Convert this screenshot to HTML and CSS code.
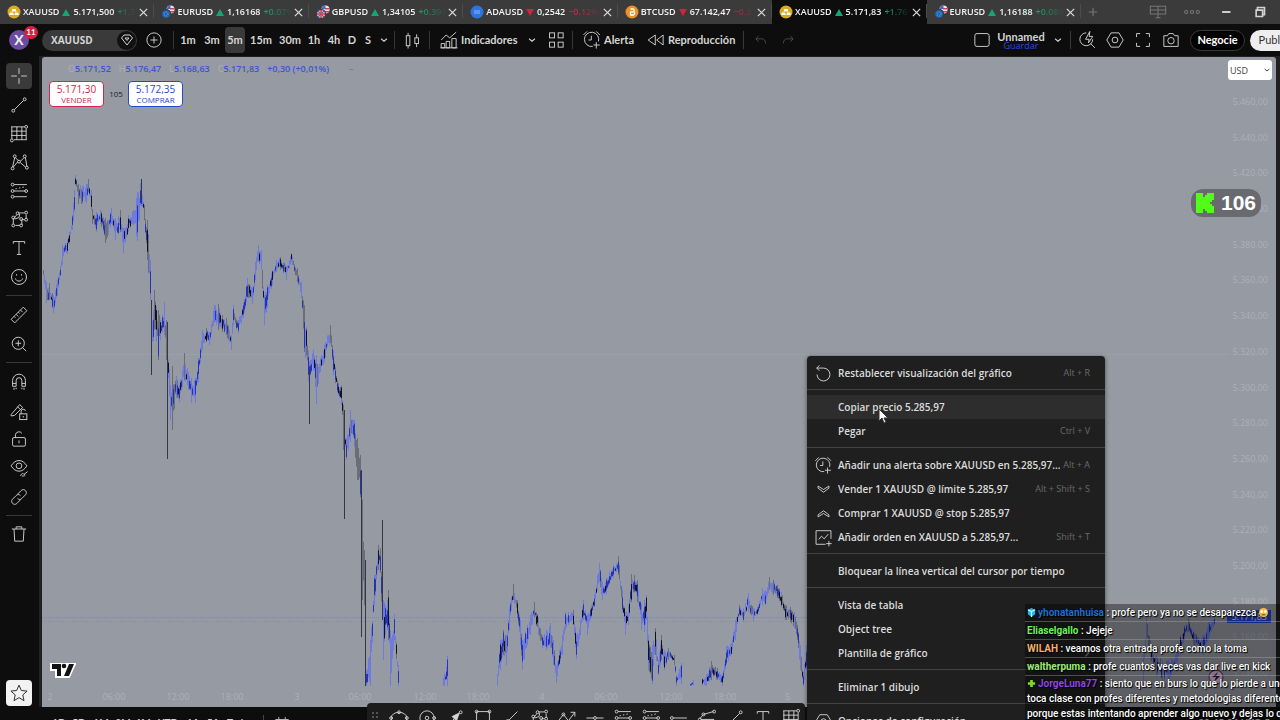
FILE: index.html
```html
<!DOCTYPE html>
<html lang="es">
<head>
<meta charset="utf-8">
<title>XAUUSD 5.171,83</title>
<link rel="stylesheet" href="styles.css">
</head>
<body>
<svg class="sprite" aria-hidden="true">
  <defs>
    <symbol id="i-close" viewBox="0 0 12 12"><path d="M2 2l8 8M10 2l-8 8"/></symbol>
    <symbol id="i-chev" viewBox="0 0 12 12"><path d="M2.500 4.500l3.500 3 3.500-3"/></symbol>
    <symbol id="i-gold" viewBox="0 0 14 14"><circle cx="7" cy="7" r="6.500" fill="#d9ab22" stroke="none"/><path d="M5.500 4h3l1 2.500h-5zM3 7.500h3L7 10H2zM8 7.500h3L12 10H7.500z" fill="#fff" stroke="none"/></symbol>
    <symbol id="i-eur" viewBox="0 0 14 14"><circle cx="9.500" cy="4.500" r="4" fill="#e9e6f2" stroke="none"/><path d="M9 3h4.400v1.500H9zM9 6h4v1.500H9z" fill="#d1404f" stroke="none"/><path d="M6 2.500A4 4 0 0 1 9.500.5V4H6z" fill="#3f66c8" stroke="none"/><circle cx="5" cy="9" r="4.500" fill="#1f63b5" stroke="#3c3c3c"/><circle cx="5" cy="9" r="2" stroke="#4ca0e8" stroke-dasharray="1 1"/></symbol>
    <symbol id="i-gbp" viewBox="0 0 14 14"><circle cx="9.500" cy="4.500" r="4" fill="#e9e6f2" stroke="none"/><path d="M9 3h4.400v1.500H9zM9 6h4v1.500H9z" fill="#d1404f" stroke="none"/><path d="M6 2.500A4 4 0 0 1 9.500.5V4H6z" fill="#3f66c8" stroke="none"/><circle cx="5" cy="9" r="4.500" fill="#eee" stroke="#3c3c3c"/><path d="M5 5v8M1 9h8" stroke="#d8324a" stroke-width="1.500"/><path d="M2 6l2 2M8 6L6 8M2 12l2-2M8 12l-2-2" stroke="#5166b8"/></symbol>
    <symbol id="i-ada" viewBox="0 0 14 14"><circle cx="7" cy="7" r="6.500" fill="#2d74dd" stroke="none"/><path d="M4.500 6h5M4.500 8h5" stroke="#a8cbff" stroke-dasharray="1 1"/></symbol>
    <symbol id="i-btc" viewBox="0 0 14 14"><circle cx="7" cy="7" r="6.500" fill="#ee8f24" stroke="none"/><path d="M5.500 4.200h2.400c1.800 0 1.800 2.700 0 2.700H5.500m0 0h2.800c1.900 0 1.900 2.900 0 2.900H5.500zM6.500 3v1.200M8 3v1.200M6.500 9.800V11M8 9.800V11" stroke="#fff"/></symbol>
    <symbol id="i-cross" viewBox="0 0 28 28"><path d="M14 3v8M14 17v8M3 14h8M17 14h8"/></symbol>
    <symbol id="i-line" viewBox="0 0 28 28"><path d="M7.500 20.500l13-13"/><circle cx="6" cy="22" r="2"/><circle cx="22" cy="6" r="2"/></symbol>
    <symbol id="i-fib" viewBox="0 0 28 28"><path d="M3 4h19M3 10h21M3 16h21M7 22h18M4 4v17M11 4v18M18 4v18M24 7v15"/><circle cx="24" cy="4" r="2"/><circle cx="4" cy="23" r="2"/></symbol>
    <symbol id="i-pattern" viewBox="0 0 28 28"><path d="M5 21L8 8M9 8l4 4M16 13l5-5M23 8l2 12M6 21l6-7M16 15l7 6"/><circle cx="8" cy="6" r="2"/><circle cx="22" cy="6" r="2"/><circle cx="14" cy="13.500" r="2"/><circle cx="5" cy="23" r="2"/><circle cx="25" cy="22" r="2"/></symbol>
    <symbol id="i-pos" viewBox="0 0 28 28"><path d="M7 5h18M7 14h16M7 22h18"/><path d="M9 11l14-3" stroke-dasharray="2 3"/><circle cx="5" cy="5" r="2"/><circle cx="5" cy="14" r="2"/><circle cx="5" cy="22" r="2"/><circle cx="24" cy="14" r="2"/></symbol>
    <symbol id="i-brush" viewBox="0 0 28 28"><path d="M6 21v-7l5-6M13 5.500h9M24 8v6M22 15h-4v7M9 23h6M15 7l-1 5-6 2"/><circle cx="6" cy="12" r="2"/><circle cx="12" cy="6" r="2"/><circle cx="24" cy="5" r="2"/><circle cx="24" cy="15" r="2"/><circle cx="17" cy="14" r="2"/><circle cx="6" cy="23" r="2"/><circle cx="17" cy="23" r="2"/></symbol>
    <symbol id="i-text" viewBox="0 0 28 28"><path d="M6 8V5h16v3M14 5v18M11 23h6"/></symbol>
    <symbol id="i-smile" viewBox="0 0 28 28"><circle cx="14" cy="14" r="10.500"/><path d="M9 16c1 5 9 5 10 0M10.500 10v2M17.500 10v2"/></symbol>
    <symbol id="i-ruler" viewBox="0 0 28 28"><path d="M3 20L20 3l5 5L8 25zM7 16l2 2M10 13l3 3M13 10l2 2M16 7l3 3"/></symbol>
    <symbol id="i-zoom" viewBox="0 0 28 28"><circle cx="13" cy="13" r="8.500"/><path d="M19 19l5 5M13 9v8M9 13h8"/></symbol>
    <symbol id="i-magnet" viewBox="0 0 28 28"><path d="M5 20v-8a9 9 0 0 1 18 0v8h-5v-8a4 4 0 0 0-8 0v8zM5 16h5M18 16h5M7 22v3M10 22v2M18 22v2M21 22v3"/></symbol>
    <symbol id="i-penlock" viewBox="0 0 28 28"><path d="M3 19L15 5l4 4L8 20l-5 1zM12 8l4 4"/><rect x="15" y="18" width="10" height="8"/><path d="M17 18v-3a3 3 0 0 1 6-1M20 21v2"/></symbol>
    <symbol id="i-lock" viewBox="0 0 28 28"><rect x="5" y="12" width="18" height="12" rx="2"/><path d="M9 12V8a5 5 0 0 1 9-2M14 16v4"/></symbol>
    <symbol id="i-eye" viewBox="0 0 28 28"><path d="M3 11c6-10 16-10 22 0-6 10-16 10-22 0z"/><circle cx="14" cy="11" r="4"/><path d="M16 25c2-4 4-4 5-2l5-4M18 25c4 1 5-1 4-2"/></symbol>
    <symbol id="i-link" viewBox="0 0 28 28"><path d="M12 10l5-5c4-4 10 2 6 6l-5 5c-2 2-4 2-6 0M16 18l-5 5c-4 4-10-2-6-6l5-5c2-2 4-2 6 0"/></symbol>
    <symbol id="i-trash" viewBox="0 0 28 28"><path d="M4 7h20M10 7V4h8v3M7 7l1 17h12l1-17"/></symbol>
    <symbol id="i-star" viewBox="0 0 28 28"><path d="M14 3l3.300 7.500 8 .8-6 5.400 1.700 8L14 20.500l-7 4.200 1.700-8-6-5.400 8-.8z"/></symbol>
    <symbol id="i-diamond" viewBox="0 0 28 28"><path d="M8 4h12l5 6-11 14L3 10zM10 10h8l-4 5z"/></symbol>
    <symbol id="i-plus" viewBox="0 0 28 28"><circle cx="14" cy="14" r="10"/><path d="M14 9v10M9 14h10"/></symbol>
    <symbol id="i-candles" viewBox="0 0 28 28"><rect x="6" y="8" width="5" height="14"/><rect x="18" y="11" width="5" height="8"/><path d="M8.500 4v4M8.500 22v4M20.500 6v5M20.500 19v5"/></symbol>
    <symbol id="i-ind" viewBox="0 0 28 28"><path d="M3 14l7-7 5 4 9-8M3 25v-6h5v6zM10 25v-9h5v9zM18 25V12h6v13zM2 25h24"/></symbol>
    <symbol id="i-grid" viewBox="0 0 28 28"><rect x="5" y="4" width="7" height="7"/><rect x="17" y="4" width="7" height="7"/><rect x="5" y="17" width="7" height="7"/><rect x="17" y="17" width="7" height="7"/></symbol>
    <symbol id="i-alarm" viewBox="0 0 28 28"><path d="M23 16a10 10 0 1 0-8 7M13 8v6H9M2 7l5-5M20 2l5 5M20 17v9M16 21h9"/></symbol>
    <symbol id="i-rewind" viewBox="0 0 28 28"><path d="M13 7v14L3 14zM24 7v14l-9-7z"/></symbol>
    <symbol id="i-undo" viewBox="0 0 28 28"><path d="M10 7l-5 5 5 5M5 12h10q7 0 7 8"/></symbol>
    <symbol id="i-redo" viewBox="0 0 28 28"><path d="M18 7l5 5-5 5M23 12H13q-7 0-7 8"/></symbol>
    <symbol id="i-square" viewBox="0 0 28 28"><rect x="4" y="5" width="20" height="18" rx="3"/></symbol>
    <symbol id="i-quick" viewBox="0 0 28 28"><path d="M13 4a9 9 0 1 0 9 9M19 19l6 6M18 2l-6 11h5l-1 5 6-9h-5z"/></symbol>
    <symbol id="i-hex" viewBox="0 0 28 28"><path d="M8.500 4h11l6 10-6 10h-11l-6-10z"/><circle cx="14" cy="14" r="4"/></symbol>
    <symbol id="i-full" viewBox="0 0 28 28"><path d="M5 10V5h5M18 5h5v5M23 18v5h-5M10 23H5v-5"/></symbol>
    <symbol id="i-cam" viewBox="0 0 28 28"><path d="M4 8h5l2-3h6l2 3h5v15H4z"/><circle cx="14" cy="15" r="4.500"/></symbol>
    <symbol id="i-reset" viewBox="0 0 28 28"><path d="M8 2L4 6l4 4M4 6h10a9.500 9.500 0 1 1-9.500 9.500"/></symbol>
    <symbol id="i-down2" viewBox="0 0 28 28"><path d="M6 9l8 5 8-5v3l-8 6-8-6z"/></symbol>
    <symbol id="i-up2" viewBox="0 0 28 28"><path d="M6 19l8-5 8 5v-3l-8-6-8 6z"/></symbol>
    <symbol id="i-order" viewBox="0 0 28 28"><path d="M25 16V4H3v20h14M7 17l4-5 4 4 6-7M22 19v8M18 23h8"/></symbol>
    <symbol id="i-panes" viewBox="0 0 28 28"><path d="M2 5h24v12H2zM2 11h24M14 5v18M10 23h8"/></symbol>
    <symbol id="i-more" viewBox="0 0 28 28"><circle cx="5" cy="14" r="2.500"/><circle cx="14" cy="14" r="2.500"/><circle cx="23" cy="14" r="2.500"/></symbol>
    <symbol id="i-ellipse" viewBox="0 0 28 28"><ellipse cx="14" cy="14" rx="11" ry="8"/><circle cx="14" cy="6" r="2"/><circle cx="3" cy="14" r="2"/><circle cx="25" cy="14" r="2"/></symbol>
    <symbol id="i-circle" viewBox="0 0 28 28"><circle cx="14" cy="14" r="10"/><circle cx="14" cy="14" r="2.500"/><circle cx="24" cy="14" r="2"/></symbol>
    <symbol id="i-arrow" viewBox="0 0 28 28"><path d="M5 23l8-8"/><path d="M10 12l10-5-4 11z" fill="currentColor"/><circle cx="22" cy="6" r="2"/></symbol>
    <symbol id="i-rect" viewBox="0 0 28 28"><path d="M5 5h18v18H5z"/><circle cx="5" cy="5" r="2"/><circle cx="23" cy="5" r="2"/></symbol>
    <symbol id="i-paint" viewBox="0 0 28 28"><path d="M23 5L11 17M5 23c0-5 3-8 7-6"/></symbol>
    <symbol id="i-wave" viewBox="0 0 28 28"><path d="M2 18l7-9 7 9 9-12M19 6h6v6"/><circle cx="9" cy="9" r="2"/></symbol>
    <symbol id="i-hline" viewBox="0 0 28 28"><path d="M2 14h10M16 14h10"/><circle cx="14" cy="14" r="2"/></symbol>
    <symbol id="i-ray" viewBox="0 0 28 28"><path d="M6 14h19"/><circle cx="4" cy="14" r="2"/></symbol>
    <symbol id="i-fork" viewBox="0 0 28 28"><path d="M4 15L9 9l14-4M5 16h19"/><circle cx="9" cy="9" r="2"/><circle cx="24" cy="5" r="2"/><circle cx="4" cy="16" r="2"/></symbol>
    <symbol id="i-cal" viewBox="0 0 28 28"><path d="M4 7h20v17H4zM4 12h20M9 3v4M19 3v4"/></symbol>
  </defs>
</svg>

<div class="app">
  <header class="tabs">
    <div class="tab-list">
      <div class="tab"><svg class="coin"><use href="#i-gold"/></svg><span class="quote"><b>XAUUSD</b><i class="up"></i>5.171,500<em class="gain">+1.77%</em></span><button class="x" aria-label="Cerrar"><svg><use href="#i-close"/></svg></button></div>
      <div class="tab"><svg class="coin"><use href="#i-eur"/></svg><span class="quote"><b>EURUSD</b><i class="up"></i>1,16168<em class="gain">+0.07%</em></span><button class="x" aria-label="Cerrar"><svg><use href="#i-close"/></svg></button></div>
      <div class="tab"><svg class="coin"><use href="#i-gbp"/></svg><span class="quote"><b>GBPUSD</b><i class="up"></i>1,34105<em class="gain">+0.39%</em></span><button class="x" aria-label="Cerrar"><svg><use href="#i-close"/></svg></button></div>
      <div class="tab"><svg class="coin"><use href="#i-ada"/></svg><span class="quote"><b>ADAUSD</b><i class="down"></i>0,2542<em class="loss">−0.12%</em></span><button class="x" aria-label="Cerrar"><svg><use href="#i-close"/></svg></button></div>
      <div class="tab"><svg class="coin"><use href="#i-btc"/></svg><span class="quote"><b>BTCUSD</b><i class="down"></i>67.142,47<em class="loss">−0.31%</em></span><button class="x" aria-label="Cerrar"><svg><use href="#i-close"/></svg></button></div>
      <div class="tab active"><svg class="coin"><use href="#i-gold"/></svg><span class="quote"><b>XAUUSD</b><i class="up"></i>5.171,83<em class="gain">+1.76%</em></span><button class="x" aria-label="Cerrar"><svg><use href="#i-close"/></svg></button></div>
      <div class="tab"><svg class="coin"><use href="#i-eur"/></svg><span class="quote"><b>EURUSD</b><i class="up"></i>1,16188<em class="gain">+0.08%</em></span><button class="x" aria-label="Cerrar"><svg><use href="#i-close"/></svg></button></div>
    </div>
    <button class="add" aria-label="Nueva pestaña"><svg viewBox="0 0 12 12"><path d="M6 1v10M1 6h10"/></svg></button>
    <div class="window">
      <button class="dim" aria-label="Paneles"><svg><use href="#i-panes"/></svg></button>
      <button class="dim" aria-label="Más"><svg><use href="#i-more"/></svg></button>
      <button aria-label="Minimizar"><svg viewBox="0 0 28 28"><path d="M8 14h13" stroke-width="3"/></svg></button>
      <button aria-label="Restaurar"><svg viewBox="0 0 28 28"><path d="M10 10V7h11v11h-3M8 11h10v10H8z" stroke-width="2.500"/></svg></button>
    </div>
  </header>

  <div class="toolbar">
    <div class="account"><span class="avatar">X</span><span class="count">11</span></div>
    <div class="symbol"><button class="name">XAUUSD</button><button class="gem" aria-label="Detalles"><svg class="ic"><use href="#i-diamond"/></svg></button></div>
    <button class="tool w34" aria-label="Comparar"><svg class="ic"><use href="#i-plus"/></svg></button>
    <span class="vr"></span>
    <button class="tool w24">1m</button><button class="tool w24">3m</button><button class="tool on">5m</button><button class="tool w30">15m</button><button class="tool w28">30m</button><button class="tool w20">1h</button><button class="tool w20">4h</button><button class="tool w16">D</button><button class="tool w16">S</button>
    <button class="tool w16" aria-label="Intervalos"><svg class="chev"><use href="#i-chev"/></svg></button>
    <span class="vr"></span>
    <button class="tool w30" aria-label="Velas"><svg class="ic"><use href="#i-candles"/></svg></button>
    <span class="vr"></span>
    <button class="tool wide w90"><svg class="ic"><use href="#i-ind"/></svg>Indicadores</button>
    <button class="tool w20" aria-label="Favoritos"><svg class="chev"><use href="#i-chev"/></svg></button>
    <button class="tool w28" aria-label="Plantillas"><svg class="ic"><use href="#i-grid"/></svg></button>
    <span class="vr"></span>
    <button class="tool wide w64"><svg class="ic"><use href="#i-alarm"/></svg>Alerta</button>
    <button class="tool wide w102"><svg class="ic"><use href="#i-rewind"/></svg>Reproducción</button>
    <span class="vr"></span>
    <button class="tool w30 off" aria-label="Deshacer"><svg class="ic small"><use href="#i-undo"/></svg></button>
    <button class="tool w24 off" aria-label="Rehacer"><svg class="ic small"><use href="#i-redo"/></svg></button>
    <div class="right">
      <button class="tool w24" aria-label="Diseño"><svg class="ic"><use href="#i-square"/></svg></button>
      <button class="layout"><span>Unnamed</span><small>Guardar</small></button>
      <button class="tool w20" aria-label="Diseños"><svg class="chev"><use href="#i-chev"/></svg></button>
      <span class="vr"></span>
      <button class="tool w28" aria-label="Búsqueda"><svg class="ic"><use href="#i-quick"/></svg></button>
      <button class="tool w28" aria-label="Configuración"><svg class="ic"><use href="#i-hex"/></svg></button>
      <button class="tool w28" aria-label="Pantalla completa"><svg class="ic"><use href="#i-full"/></svg></button>
      <button class="tool w28" aria-label="Captura"><svg class="ic"><use href="#i-cam"/></svg></button>
      <button class="trade">Negocie</button>
      <button class="publish">Publicar</button>
    </div>
  </div>

  <div class="main">
    <nav class="side">
      <div class="group g8">
        <button class="sel" aria-label="Cursor"><svg><use href="#i-cross"/></svg></button>
        <button aria-label="Líneas"><svg><use href="#i-line"/></svg></button>
        <button aria-label="Fibonacci"><svg><use href="#i-fib"/></svg></button>
        <button aria-label="Patrones"><svg><use href="#i-pattern"/></svg></button>
        <button aria-label="Posiciones"><svg><use href="#i-pos"/></svg></button>
        <button aria-label="Formas"><svg><use href="#i-brush"/></svg></button>
        <button aria-label="Texto"><svg><use href="#i-text"/></svg></button>
        <button aria-label="Iconos"><svg><use href="#i-smile"/></svg></button>
      </div>
      <hr>
      <div class="group g2">
        <button aria-label="Medir"><svg><use href="#i-ruler"/></svg></button>
        <button aria-label="Ampliar"><svg><use href="#i-zoom"/></svg></button>
      </div>
      <hr>
      <div class="group g5">
        <button aria-label="Imán"><svg><use href="#i-magnet"/></svg></button>
        <button aria-label="Modo dibujo"><svg><use href="#i-penlock"/></svg></button>
        <button aria-label="Bloquear"><svg><use href="#i-lock"/></svg></button>
        <button aria-label="Ocultar"><svg><use href="#i-eye"/></svg></button>
        <button aria-label="Sincronizar"><svg><use href="#i-link"/></svg></button>
      </div>
      <hr>
      <div class="group"><button aria-label="Eliminar"><svg><use href="#i-trash"/></svg></button></div>
      <button class="fav" aria-label="Favoritos"><svg><use href="#i-star"/></svg></button>
    </nav>

    <section class="chart">
      <svg class="plot" id="plot" viewBox="42 57 1234 650" preserveAspectRatio="none" aria-label="Gráfico de velas XAUUSD"></svg>
      <div class="prices" id="prices"></div>
      <div class="times" id="times"></div>
      <span class="last">5.171,83</span>
      <div class="legend"><span><i>O</i>5.171,52</span><span><i>H</i>5.176,47</span><span><i>L</i>5.168,63</span><span><i>C</i>5.171,83</span><span>+0,30 (+0,01%)</span><span class="dash">–</span></div>
      <div class="orders">
        <button class="sell">5.171,30<small>VENDER</small></button>
        <span>105</span>
        <button class="buy">5.172,35<small>COMPRAR</small></button>
      </div>
      <select class="currency" aria-label="Moneda"><option>USD</option></select>
      <svg class="cur-chev"><use href="#i-chev"/></svg>
      <svg class="tv" viewBox="0 0 26 16"><path d="M1 2h24l-6 13H6V8H1z" fill="#fff" stroke="#fff" stroke-width="2"/><path d="M2 2h9v12H7V7H2zM19 2h5l-5 12h-5z" fill="#111" stroke="none"/><circle cx="14" cy="4" r="2.300" fill="#111" stroke="none"/></svg>
      <svg class="flash" viewBox="0 0 16 16"><circle cx="8" cy="8" r="7" fill="#d6b9dc" stroke="#6d4878"/><path d="M10 3L4 8h4l-2 5 6-6H8z" fill="#30203a" stroke="none"/></svg>
    </section>
  </div>

  <footer class="ranges">
    <button class="w20">1D</button><button class="w20">5D</button><button class="w24">1M</button><button class="w20">3M</button><button class="w20">6M</button><button class="w30">YTD</button><button class="w20">1A</button><button class="w20">5A</button><button class="w30">Todo</button>
    <button class="cal" aria-label="Ir a fecha"><svg><use href="#i-cal"/></svg></button>
    <span class="clock">20:45:24 UTC-5</span>
  </footer>

  <div class="draw">
    <span class="grip"></span>
    <button aria-label="Elipse"><svg><use href="#i-ellipse"/></svg></button>
    <button aria-label="Círculo"><svg><use href="#i-circle"/></svg></button>
    <button aria-label="Flecha"><svg><use href="#i-arrow"/></svg></button>
    <button aria-label="Rectángulo"><svg><use href="#i-rect"/></svg></button>
    <button aria-label="Pincel"><svg><use href="#i-paint"/></svg></button>
    <button aria-label="Trazado"><svg><use href="#i-brush"/></svg></button>
    <button aria-label="Onda"><svg><use href="#i-wave"/></svg></button>
    <button aria-label="Horizontal"><svg><use href="#i-hline"/></svg></button>
    <button aria-label="Largo"><svg><use href="#i-pos"/></svg></button>
    <button aria-label="Corto"><svg><use href="#i-pos"/></svg></button>
    <button aria-label="Rayo"><svg><use href="#i-ray"/></svg></button>
    <button aria-label="Horquilla"><svg><use href="#i-fork"/></svg></button>
    <button aria-label="Tendencia"><svg><use href="#i-line"/></svg></button>
    <button aria-label="Texto"><svg><use href="#i-text"/></svg></button>
    <button aria-label="Fibonacci"><svg><use href="#i-fib"/></svg></button>
  </div>

  <div class="menu" role="menu">
    <button role="menuitem"><svg><use href="#i-reset"/></svg><span>Restablecer visualización del gráfico</span><kbd>Alt + R</kbd></button>
    <hr>
    <button role="menuitem" class="hover"><span>Copiar precio 5.285,97</span></button>
    <button role="menuitem"><span>Pegar</span><kbd>Ctrl + V</kbd></button>
    <hr>
    <button role="menuitem"><svg><use href="#i-alarm"/></svg><span>Añadir una alerta sobre XAUUSD en 5.285,97...</span><kbd>Alt + A</kbd></button>
    <button role="menuitem"><svg><use href="#i-down2"/></svg><span>Vender 1 XAUUSD @ límite 5.285,97</span><kbd>Alt + Shift + S</kbd></button>
    <button role="menuitem"><svg><use href="#i-up2"/></svg><span>Comprar 1 XAUUSD @ stop 5.285,97</span></button>
    <button role="menuitem"><svg><use href="#i-order"/></svg><span>Añadir orden en XAUUSD a 5.285,97...</span><kbd>Shift + T</kbd></button>
    <hr>
    <button role="menuitem"><span>Bloquear la línea vertical del cursor por tiempo</span></button>
    <hr>
    <button role="menuitem"><span>Vista de tabla</span></button>
    <button role="menuitem"><span>Object tree</span></button>
    <button role="menuitem"><span>Plantilla de gráfico</span><svg class="sub" viewBox="0 0 12 12"><path d="M4 2l4 4-4 4"/></svg></button>
    <hr>
    <button role="menuitem"><span>Eliminar 1 dibujo</span></button>
    <hr>
    <button role="menuitem"><svg><use href="#i-hex"/></svg><span>Opciones de configuración...</span></button>
  </div>
  <svg class="pointer" viewBox="0 0 12 16"><path d="M2 1v12l3-3 2 5 2-1-2-4h4z" fill="#fff" stroke="#333" stroke-width="1"/></svg>

  <div class="viewers"><svg viewBox="0 0 18 20"><path d="M0 0h7v4h2V2h2V0h7v7h-2v2h-2v2h2v2h2v7h-7v-2H9v-2H7v4H0z" fill="#53fc18" stroke="none"/></svg>106</div>

  <div class="chat">
    <p><svg viewBox="0 0 10 10"><path d="M5 0l4 2v5L5 10 1 7V2z" fill="#1fb6e8" stroke="none"/><path d="M1 2l4 2 4-2M5 4v6" stroke="#bff"/></svg><b class="c1">yhonatanhuisa</b> : profe pero ya no se desaparezca <svg viewBox="0 0 10 10"><circle cx="5" cy="5" r="5" fill="#f5bd3c" stroke="none"/><circle cx="3" cy="4" r="1.500" fill="#fff" stroke="none"/><circle cx="7" cy="4" r="1.500" fill="#fff" stroke="none"/><path d="M3 7.500h4" stroke="#8a4b10"/></svg></p>
    <p><b class="c2">Eliaselgallo</b> : Jejeje</p>
    <p><b class="c3">WILAH</b> : veamos otra entrada profe como la toma</p>
    <p><b class="c4">waltherpuma</b> : profe cuantos veces vas dar live en kick</p>
    <p><svg viewBox="0 0 10 10"><path d="M3.500 1h3v2.500H9v3H6.500V9h-3V6.500H1v-3h2.500z" fill="#7ddb22" stroke="none"/></svg><b class="c5">JorgeLuna77</b> : siento que en burs lo que lo pierde a uno es<br>toca clase con profes diferentes y metodologias diferentes y<br>porque estas intentando aprender algo nuevo y dejas lo que</p>
  </div>
</div>
<script src="chart.js"></script>
</body>
</html>
```

FILE: styles.css
```css
* { box-sizing: border-box; }
body {
  margin: 0;
  overflow: hidden;
  background: #0c0c0c;
  color: #d4d4d4;
  font: 700 11px/14px Lato, "Noto Sans", sans-serif;
}
button {
  margin: 0;
  padding: 0;
  border: 0;
  background: none;
  color: inherit;
  font: inherit;
  white-space: nowrap;
}
svg { fill: none; stroke: currentColor; stroke-width: 1.3; display: block; flex: none; }
.sprite { position: absolute; width: 0; height: 0; }
.app { position: relative; display: flex; flex-direction: column; height: 100vh; overflow: hidden; }
.w16 { width: 16px; } .w20 { width: 20px; } .w24 { width: 24px; } .w28 { width: 28px; }
.w30 { width: 30px; } .w34 { width: 34px; } .w64 { width: 64px; } .w90 { width: 90px; } .w102 { width: 102px; }

/* Tab strip */
.tabs { display: flex; flex: 0 0 24px; background: #3b3b3b; }
.tab-list { display: flex; flex: 0 1 1081px; min-width: 0; }
.tab { display: flex; flex: 1 1 0; min-width: 0; align-items: center; padding: 0 5px 0 7px; font: 600 9px/14px "Open Sans", sans-serif; color: #f4f4f4; position: relative; }
.tab::after { content: ""; position: absolute; right: 0; top: 4px; height: 14px; width: 1px; background: #4c4c4c; }
.tab.active { background: #0d0d0d; }
.coin { width: 14px; height: 14px; }
.quote { display: flex; align-items: center; flex: 1; min-width: 0; overflow: hidden; white-space: nowrap; margin-left: 2px;
  -webkit-mask-image: linear-gradient(90deg, #000 78%, transparent); mask-image: linear-gradient(90deg, #000 78%, transparent); }
.quote b { font-weight: 600; }
.quote em { font-style: normal; margin-left: 3px; }
.gain { color: #1f9a6b; } .loss { color: #c32a48; }
.up, .down { margin: 0 3px; border: 4px solid transparent; border-top: 0; border-bottom: 7px solid #17a673; }
.down { border-bottom: 0; border-top: 7px solid #cf2340; }
.x svg { width: 11px; height: 11px; color: #ddd; }
.add { width: 24px; color: #777; }
.add svg { width: 10px; height: 10px; margin: 0 auto; }
.window { display: flex; margin-left: auto; padding-right: 3px; }
.window button { width: 34px; }
.window svg { width: 18px; height: 18px; margin: 0 auto; stroke-width: 1.6; }
.window .dim { color: #777; }

/* Main toolbar */
.toolbar { display: flex; flex: 0 0 32px; align-items: center; background: #0d0d0d; }
.account { position: relative; width: 42px; padding-left: 9px; }
.avatar { display: block; width: 20px; height: 20px; border-radius: 50%; background: #6b4ca0; color: #eee; text-align: center; font-size: 14px; line-height: 20px; }
.count { position: absolute; left: 24px; top: -4px; width: 14px; height: 13px; border-radius: 7px; background: #d3203f; color: #fff; font-size: 8px; line-height: 13px; text-align: center; }
.symbol { display: flex; align-items: center; width: 95px; height: 21px; padding: 0 1px 0 9px; border-radius: 11px; background: #3a3a3a; }
.symbol .name { flex: 1; text-align: left; font: 700 10px/14px "Open Sans", sans-serif; }
.gem { display: grid; place-items: center; width: 19px; height: 19px; border-radius: 50%; background: #111; }
.gem .ic { width: 14px; height: 14px; stroke-width: 2; }
.tool { display: flex; align-items: center; justify-content: center; flex: none; height: 26px; }
.tool.wide { justify-content: flex-start; gap: 2px; padding-left: 7px; }
.tool.on { width: 20px; margin: 0 1px; border-radius: 4px; background: #3a3a3a; }
.tool.off { color: #5a5a5a; }
.ic { width: 20px; height: 20px; }
.ic.small { width: 16px; height: 16px; }
.chev { width: 10px; height: 10px; }
.vr { flex: none; width: 1px; height: 18px; margin: 0 2px; background: #383838; }
.right { display: flex; align-items: center; flex: none; margin-left: auto; margin-right: -26px; }
.layout { width: 54px; line-height: 11px; }
.layout small { display: block; font: 400 9px/8px "Open Sans", sans-serif; color: #2c4be8; }
.trade, .publish { height: 21px; border-radius: 11px; padding: 0 8px; }
.trade { margin-left: 5px; background: #000; border: 1px solid #3a3a3a; color: #fff; width: 55px; padding: 0; }
.publish { margin-left: 5px; background: #eee; color: #333; width: 56px; font-weight: 400; }

/* Body: drawing tools and chart */
.main { display: flex; flex: 1; min-height: 0; background: #202020; }
.side { display: flex; flex-direction: column; flex: 0 0 39px; margin-right: 3px; padding: 6px 6px 1px; background: #0d0d0d; }
.group { display: grid; grid-auto-rows: 1fr; }
.g8 { height: 229px; } .g2 { height: 57px; } .g5 { height: 143px; }
.side button { display: grid; place-items: center; width: 26px; min-height: 26px; border-radius: 4px; align-self: center; }
.side svg { width: 20px; height: 20px; }
.side .sel { background: #3a3a3a; }
.side hr { width: 26px; height: 1px; margin: 4px 0 5px; border: 0; background: #383838; }
.side .fav { margin-top: auto; background: #f2f2f2; color: #222; align-self: flex-start; }
.chart { position: relative; flex: 1; margin: 1px 4px 0 0; background: #969aa3; border-radius: 3px 3px 0 0; overflow: hidden; font-weight: 400; font-family: "Open Sans", sans-serif; }
.plot { position: absolute; inset: 0; width: 100%; height: 100%; }
.prices { position: absolute; right: 8px; top: 39px; bottom: 28px; display: flex; flex-direction: column; justify-content: space-between; color: #adb0ba; font-size: 9px; line-height: 12px; }
.times { position: absolute; left: 0; right: 0; bottom: 4px; height: 12px; color: #adb0ba; font-size: 9px; line-height: 12px; }
.times span { position: absolute; transform: translateX(-50%); }
.last { position: absolute; right: 5px; bottom: 84px; padding: 0 4px; background: #1c46d8; color: #dfe4ff; font-size: 9px; line-height: 13px; }
.legend { position: absolute; left: 26px; top: 6px; display: flex; gap: 8px; color: #3d55cf; font-size: 9px; font-weight: 600; line-height: 12px; }
.legend i { font-style: normal; font-weight: 400; color: #adb0ba; }
.dash { margin-left: 12px; opacity: .5; }
.orders { position: absolute; left: 7px; top: 24px; display: flex; align-items: center; font-size: 10px; }
.orders button { width: 55px; height: 26px; border: 1px solid; border-radius: 4px; background: #fff; line-height: 11px; }
.orders small { display: block; font-size: 8px; line-height: 10px; }
.orders span { width: 24px; text-align: center; font-size: 8px; color: #222; }
.sell { color: #c92a48; } .buy { color: #2948c8; }
.currency { position: absolute; right: 4px; top: 3px; width: 44px; height: 20px; padding: 0 2px; appearance: none; border: 0; border-radius: 3px; background: #fff; color: #444; font: 400 9px "Open Sans", sans-serif; }
.cur-chev { position: absolute; right: 5px; top: 9px; width: 8px; height: 8px; color: #333; pointer-events: none; }
.tv { position: absolute; left: 8px; bottom: 29px; width: 26px; height: 16px; }
.flash { position: absolute; right: 52px; bottom: 22px; width: 16px; height: 16px; }

/* Range bar */
.ranges { display: flex; align-items: flex-start; flex: 0 0 13px; padding: 8px 10px 0 49px; overflow: hidden; background: #0d0d0d; font-size: 10px; }
.ranges button { flex: none; }
.cal { margin-left: 10px; padding-left: 9px; border-left: 1px solid #444; }
.cal svg { width: 18px; height: 18px; }
.clock { margin-left: auto; }

/* Floating drawing toolbar */
.draw { position: absolute; left: 367px; top: calc(100vh - 17px); display: flex; align-items: center; height: 29px; border-radius: 4px; background: #1c1c1c; padding-left: 4px; }
.draw button { width: 28px; }
.draw svg { width: 20px; height: 20px; margin: 0 auto; }
.grip { width: 8px; height: 14px; background: radial-gradient(circle, #555 1px, transparent 1px) 0 0 / 4px 4px; margin-right: 6px; }

/* Context menu */
.menu { position: absolute; left: 807px; top: 356px; width: 298px; padding: 5px 0; background: #1f1f1f; border-radius: 4px; box-shadow: 0 1px 4px rgba(0, 0, 0, .5); font: 600 10px/14px "Open Sans", sans-serif; color: #dcdcdc; }
.menu button { position: relative; display: flex; align-items: center; width: 100%; height: 24px; padding: 0 15px 0 31px; }
.menu svg { position: absolute; left: 7px; width: 19px; height: 19px; }
.menu span { flex: 1; text-align: left; }
.menu kbd { font: 400 9px/14px "Open Sans", sans-serif; color: #6a6a6a; }
.menu .sub { left: auto; right: 13px; width: 10px; height: 10px; color: #999; }
.menu .hover { background: #2d2d2d; }
.menu hr { height: 1px; margin: 4px 0 5px; border: 0; background: #434343; }
.pointer { position: absolute; left: 877px; top: 408px; width: 12px; height: 16px; }

/* Stream overlays */
.viewers { position: absolute; right: 19px; top: 189px; display: flex; align-items: center; gap: 7px; height: 28px; padding: 0 5px; border-radius: 12px; background: #696a70; color: #fff; font: 700 21px/28px "Liberation Sans", Arial, sans-serif; }
.viewers svg { width: 18px; height: 20px; }
.chat { position: absolute; left: 1025px; right: 0; top: 604px; bottom: 0; overflow: hidden; background: rgba(0, 0, 0, .38); color: #fff; font: 500 10px/15px Roboto, sans-serif; white-space: nowrap; text-shadow: 0 0 1px #000, 1px 1px 1px #000; }
.chat p { margin: 0; padding: 1px 2px; border-bottom: 1px solid rgba(190, 190, 195, .35); }
.chat p:last-child { padding-top: 0; }
.chat b { font-weight: 700; }
.chat svg { display: inline-block; width: 9px; height: 9px; margin-right: 2px; vertical-align: -1px; }
.c1 { color: #1f6fd0; } .c2 { color: #6cf25a; } .c3 { color: #f3b26b; } .c4 { color: #9fea7c; } .c5 { color: #9146e0; }
```

FILE: chart.js
```js
// Price envelope of each session: [x, high, low]
const runs = [
  [[43,270,275],[46,282,303],[49,283,300],[53,295,313],[57,280,296],[60,266,276],[62,245,265],[65,243,252],[67,240,254],[69,232,244],[72,215,230],[74,190,212],[75,175,185],[78,184,204],[82,186,204],[86,184,203],[88,179,192],[91,190,210],[92,209,224],[96,212,232],[100,210,224],[105,218,243],[108,220,235],[111,208,224],[115,218,240],[120,210,232],[123,228,253],[128,215,232],[133,210,225],[137,192,241],[141,179,206],[144,205,220],[147,220,260],[150,260,300],[151,300,374],[154,290,330],[158,310,360],[160,320,340],[164,302,335],[166,320,360],[170,385,420],[172,366,430],[176,376,398],[179,385,402],[184,353,380],[188,372,390],[191,378,403],[195,378,403],[198,358,382],[202,330,350],[206,328,342],[209,332,345],[214,305,322],[218,304,330],[222,315,332],[226,318,335],[231,335,350],[233,305,325],[238,320,333],[243,302,318],[247,278,298],[252,288,304],[255,262,280],[258,245,262],[261,250,270],[264,295,325],[267,285,308],[272,270,285],[276,260,272],[280,257,270],[286,266,280],[291,253,262],[297,268,282],[301,282,298],[304,305,352],[308,350,382],[313,350,370],[316,355,404],[320,358,372],[324,345,362],[330,325,343],[333,350,375],[337,380,392],[341,385,405],[343,405,450],[346,438,460],[350,410,442],[354,420,447],[357,438,480],[360,455,497],[362,500,600],[364,550,605],[366,670,686],[370,640,686],[374,575,605],[378,545,570],[380,548,573],[383,600,660],[385,605,635],[388,590,640],[390,630,686],[394,614,640],[398,665,686]],
  [[443,678,686],[447,656,686]],
  [[497,674,686],[500,640,670],[503,630,655],[506,635,665],[509,607,630],[513,584,600],[517,600,618],[520,620,645],[522,640,670],[527,625,645],[530,615,635],[534,602,617],[538,618,635],[542,635,648],[546,630,650],[550,623,648],[553,640,665],[556,665,683],[559,650,665],[562,635,655],[565,612,630],[568,612,625],[573,610,625],[576,635,659],[580,620,635],[583,600,620],[587,615,635],[591,605,618],[594,594,607],[597,575,590],[599,563,582],[602,582,600],[606,578,595],[609,572,584],[613,565,578],[618,556,575],[622,590,612],[625,612,635],[628,605,625],[631,574,602],[634,575,592],[637,580,602],[641,604,630],[644,600,632],[646,595,620],[648,635,670],[652,645,684],[655,628,655],[658,660,675],[661,635,660],[664,650,670],[668,648,660],[674,655,665],[676,675,686],[681,663,684]],
  [[690,684,686],[693,680,686]],
  [[702,678,686],[706,674,686],[711,661,680],[717,668,680],[722,675,686],[726,646,665],[731,643,655],[735,620,640],[739,605,615],[743,608,622],[748,593,612],[753,608,622],[757,607,615],[762,588,605],[765,590,605],[769,577,590],[773,580,595],[777,585,598],[781,592,607],[785,605,620],[790,607,622],[794,612,628],[797,625,640],[800,645,670],[803,672,686],[806,645,670]],
  [[1143,655,680],[1146,618,640],[1150,640,660],[1156,655,677],[1162,660,680],[1168,660,680],[1175,655,670],[1180,635,655],[1184,625,640],[1188,618,632],[1193,630,645],[1199,638,650],[1203,635,655],[1208,622,640],[1214,617,625]]
];
// Single long candles: [x, high, low]
const spikes = [[167,322,459],[309,370,424],[344,410,519],[361,470,637],[365,560,686],[382,520,620],[141,179,200],[151,300,375]];

const plot = document.getElementById("plot");
const NS = "http://www.w3.org/2000/svg";
function line(x1, y1, x2, y2, stroke, width, dash) {
  const el = document.createElementNS(NS, "line");
  const attrs = { x1, y1, x2, y2, stroke, "stroke-width": width };
  if (dash) attrs["stroke-dasharray"] = dash;
  for (const k in attrs) el.setAttribute(k, attrs[k]);
  plot.appendChild(el);
}
let seed = 7;
function rnd() {
  seed = (seed * 16807) % 2147483647;
  return seed / 2147483647;
}
line(42, 354.5, 1230, 354.5, "#9da0a8", 1);
line(42, 617.5, 1226, 617.5, "#7e84b8", 1, "1 1");
line(42, 621.5, 1226, 621.5, "#898d9d", 1, "1 2");
for (const run of runs) {
  for (let i = 0; i < run.length; i++) {
    const a = run[i];
    const b = run[i + 1] || [a[0] + 1, a[1], a[2]];
    for (let x = a[0]; x < b[0]; x++) {
      const t = (x - a[0]) / (b[0] - a[0]);
      const hi = a[1] + (b[1] - a[1]) * t;
      const lo = Math.min(686, a[2] + (b[2] - a[2]) * t);
      const h = lo - hi;
      const falling = b[1] > a[1];
      const top = hi + (x === a[0] ? 0 : rnd() * h * 0.4);
      const bottom = lo - (x === a[0] ? 0 : rnd() * h * 0.4);
      line(x + 0.5, top, x + 0.5, bottom, falling && rnd() < 0.6 ? "#6b6e78" : "#6f7bdc", 1);
      if (rnd() < 0.5) {
        const mid = top + (bottom - top) * (0.1 + rnd() * 0.3);
        line(x + 0.5, mid, x + 0.5, mid + (bottom - top) * 0.55, rnd() < (falling ? 0.5 : 0.2) ? "#10131c" : "#2334b4", 1);
      }
    }
  }
}
for (const [x, hi, lo] of spikes) line(x + 0.5, hi, x + 0.5, lo, "#343846", 1);

const prices = document.getElementById("prices");
for (let p = 460; p >= 140; p -= 20) {
  const s = document.createElement("span");
  s.textContent = "5." + p + ",00";
  prices.appendChild(s);
}
const times = document.getElementById("times");
const labels = [[50,"2"],[114,"06:00"],[178,"12:00"],[232,"18:00"],[297,"3"],[360,"06:00"],[425,"12:00"],[478,"18:00"],[542,"4"],[606,"06:00"],[671,"12:00"],[725,"18:00"],[788,"5"]];
for (const [x, text] of labels) {
  const s = document.createElement("span");
  s.textContent = text;
  s.style.left = ((x - 42) / 12.34).toFixed(2) + "%";
  times.appendChild(s);
}
```
